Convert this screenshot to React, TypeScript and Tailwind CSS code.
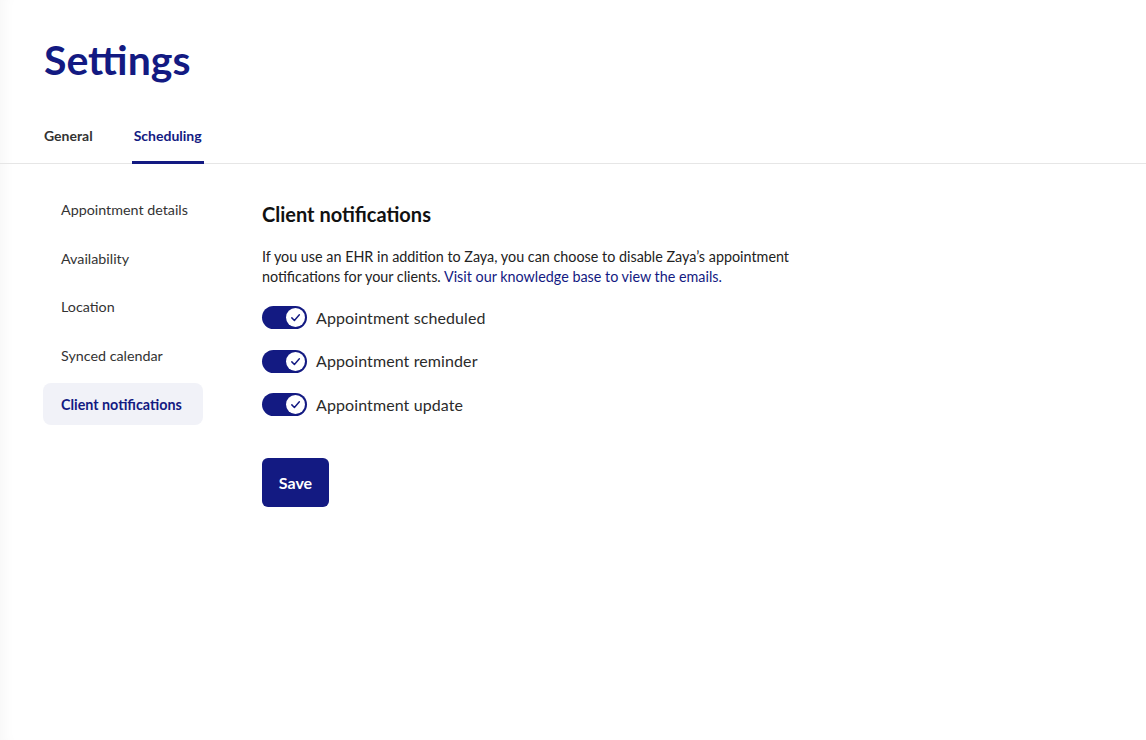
import { useState } from "react";

const NAVY = "bg-[#131a82]";

function Toggle({ label }: { label: string }) {
  const [on, setOn] = useState(true);
  return (
    <div className="flex items-center h-[23px] select-none">
      <button
        type="button"
        onClick={() => setOn(!on)}
        className={`relative w-[45px] h-[23px] rounded-full ${on ? NAVY : "bg-gray-300"} shrink-0`}
      >
        <span
          className={`absolute top-[2px] ${on ? "left-[24px]" : "left-[2px]"} w-[19px] h-[19px] rounded-full bg-white flex items-center justify-center`}
        >
          {on && (
            <svg width="11" height="11" viewBox="0 0 12 12" fill="none">
              <path d="M2 6.4 4.8 9.2 10.2 3" stroke="#131a82" strokeWidth="1.6" strokeLinecap="round" strokeLinejoin="round" />
            </svg>
          )}
        </span>
      </button>
      <span className="ml-[9px] text-[16px] text-[#2b2b2b] tracking-[0.1px]">{label}</span>
    </div>
  );
}

export default function App() {
  const side = ["Appointment details", "Availability", "Location", "Synced calendar", "Client notifications"];
  return (
    <div
      className="min-h-[740px] bg-white shadow-[inset_14px_0_14px_-10px_rgba(0,0,0,0.035)]"
      style={{ fontFamily: "Lato, 'Noto Sans', sans-serif" }}
    >
      <div className="px-[44px] pt-[36px]">
        <h1 className="text-[41px] leading-[48px] font-bold text-[#131a82]">Settings</h1>
        <div className="flex gap-[39px] mt-[41px]">
          <div className="pb-[18px] text-[14px] font-bold text-[#333]">General</div>
          <div className="pb-[15px] px-[2px] text-[14px] font-bold text-[#131a82] border-b-[3px] border-[#131a82]">
            Scheduling
          </div>
        </div>
      </div>
      <div className="border-t border-[#e6e6e6] -mt-[1px]" />
      <div className="flex pl-[43px] pt-[25px]">
        <nav className="w-[160px] shrink-0 flex flex-col gap-[6.6px]">
          {side.map((s) => {
            const active = s === "Client notifications";
            return (
              <div
                key={s}
                className={`h-[42px] flex items-center px-[18px] rounded-lg text-[14.3px] whitespace-nowrap ${
                  active ? "bg-[#f1f2f8] text-[#131a82] font-bold" : "text-[#333]"
                }`}
              >
                {s}
              </div>
            );
          })}
        </nav>
        <main className="ml-[59px] pt-[12px]">
          <h2 className="text-[20px] leading-[26px] font-bold text-[#111]">Client notifications</h2>
          <p className="mt-[20px] text-[14.35px] leading-[19.5px] text-[#222] w-[580px]">
            If you use an EHR in addition to Zaya, you can choose to disable Zaya’s appointment
            <br />
            notifications for your clients. <span className="text-[#131a82]">Visit our knowledge base to view the emails.</span>
          </p>
          <div className="mt-[20px] flex flex-col gap-[20.5px]">
            <Toggle label="Appointment scheduled" />
            <Toggle label="Appointment reminder" />
            <Toggle label="Appointment update" />
          </div>
          <button className={`mt-[42px] w-[67px] h-[49px] rounded-md ${NAVY} text-white text-[16px] font-bold`}>
            Save
          </button>
        </main>
      </div>
    </div>
  );
}
